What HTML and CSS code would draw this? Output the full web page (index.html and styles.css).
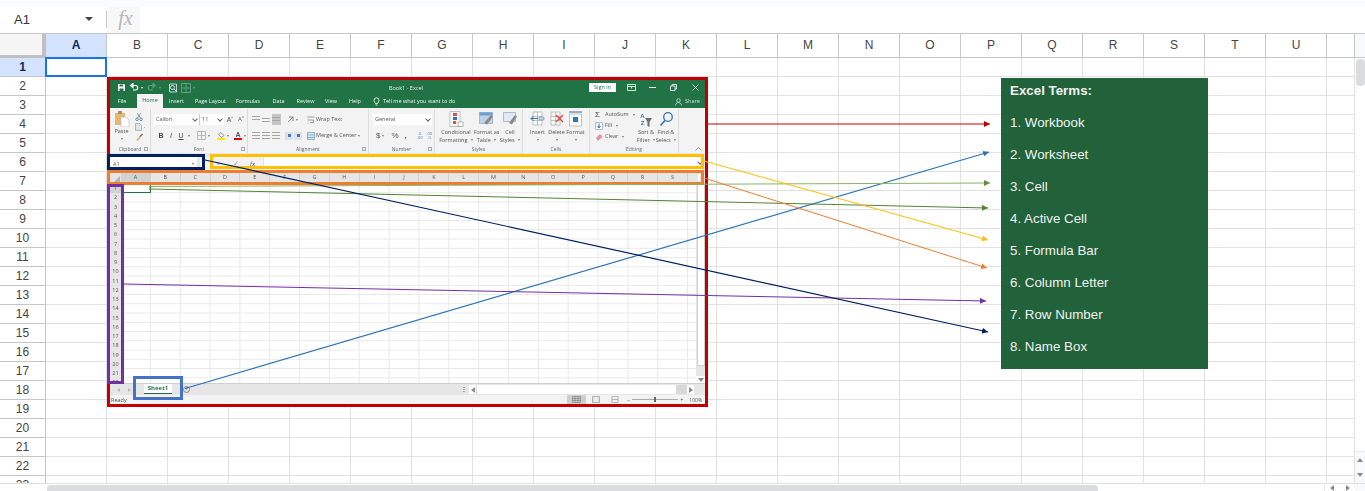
FILE: index.html
```html
<!DOCTYPE html>
<html lang="en">
<head>
    <meta charset="UTF-8">
    <meta name="viewport" content="width=device-width, initial-scale=1.0">
    <title>Excel Terms - Spreadsheet</title>
    <link rel="stylesheet" href="styles.css">
</head>
<body>
    <div class="app">
        <div class="top-strip"></div>

        <!-- Formula bar -->
        <div class="formula-bar">
            <div class="name-box"><span>A1</span><i class="caret"></i></div>
            <div class="fx-box">fx</div>
        </div>

        <!-- Column letters -->
        <div class="col-heads">
            <div class="corner"></div>
            <div class="col-head selected">A</div><div class="col-head">B</div><div class="col-head">C</div><div class="col-head">D</div><div class="col-head">E</div><div class="col-head">F</div><div class="col-head">G</div><div class="col-head">H</div><div class="col-head">I</div><div class="col-head">J</div><div class="col-head">K</div><div class="col-head">L</div><div class="col-head">M</div><div class="col-head">N</div><div class="col-head">O</div><div class="col-head">P</div><div class="col-head">Q</div><div class="col-head">R</div><div class="col-head">S</div><div class="col-head">T</div><div class="col-head">U</div>
            <div class="col-head last"></div>
            <div class="scroll-corner"></div>
        </div>

        <!-- Sheet body -->
        <div class="sheet-body">
            <div class="row-heads">
                <div class="row-head selected">1</div><div class="row-head">2</div><div class="row-head">3</div><div class="row-head">4</div><div class="row-head">5</div><div class="row-head">6</div><div class="row-head">7</div><div class="row-head">8</div><div class="row-head">9</div><div class="row-head">10</div><div class="row-head">11</div><div class="row-head">12</div><div class="row-head">13</div><div class="row-head">14</div><div class="row-head">15</div><div class="row-head">16</div><div class="row-head">17</div><div class="row-head">18</div><div class="row-head">19</div><div class="row-head">20</div><div class="row-head">21</div><div class="row-head">22</div><div class="row-head">23</div>
            </div>
            <div class="cells"><div class="active-cell"></div></div>
            <div class="v-scroll">
                <div class="v-thumb"></div>
                <div class="v-btn"><i class="tri-up"></i></div>
                <div class="v-btn"><i class="tri-down"></i></div>
            </div>
        </div>

        <!-- Bottom scrollbar -->
        <div class="h-scroll">
            <div class="h-thumb"></div>
            <div class="h-btns"><i class="tri-left"></i><i class="tri-right"></i></div>
            <div class="scroll-end"></div>
        </div>

        <!-- Floating Excel screenshot -->
        <div class="excel">
            <div class="xl-title">
                <div class="qat">
                    <svg width="9" height="9" viewBox="0 0 9 9"><path d="M1 1h6l1 1v6H1z" fill="#fff"/><path d="M2.500 1.500h3.500v2h-3.500zM2.500 5.500h4v2.500h-4z" fill="#217346"/></svg>
                    <svg class="qat-undo" width="10" height="9" viewBox="0 0 10 9"><path d="M3 2.500h3.500a2 2 0 0 1 0 4.500H4M1.500 2.500l2.500-2v4z" fill="none" stroke="#fff" stroke-width="1.100"/></svg>
                    <i class="mini-caret white"></i>
                    <svg class="qat-redo" width="10" height="9" viewBox="0 0 10 9"><path d="M7 2.500H3.500a2 2 0 0 0 0 4.500H6M8.500 2.500L6 .5v4z" fill="none" stroke="#5f9c7c" stroke-width="1.100"/></svg>
                    <i class="mini-caret faded"></i>
                    <svg class="qat-preview" width="10" height="10" viewBox="0 0 10 10"><path d="M1.500 1h7v8h-7z" fill="none" stroke="#e4efe9" stroke-width=".8"/><circle cx="4.500" cy="4.500" r="2" fill="none" stroke="#fff" stroke-width=".8"/><path d="M6 6l2.500 2.500" stroke="#fff" stroke-width=".8"/></svg>
                    <svg class="qat-grid" width="10" height="10" viewBox="0 0 10 10"><path d="M.5.5h9v9h-9zM5 .5v9M.5 5h9" fill="none" stroke="#72a78b" stroke-width=".8"/></svg>
                    <i class="mini-caret faded qat-more"></i>
                </div>
                <div class="xl-doc">Book1 - Excel</div>
                <div class="signin">Sign in</div>
                <svg class="win win-ribbon" width="9" height="7" viewBox="0 0 9 7"><path d="M.5.5h8v6h-8zM.5 2.500h8M4.500 2.500v2" fill="none" stroke="#fff" stroke-width=".8"/></svg>
                <div class="win win-min"></div>
                <svg class="win win-restore" width="7" height="7" viewBox="0 0 7 7"><path d="M.5 2h4.500v4.500H.5zM2 2V.5h4.500V5H5" fill="none" stroke="#fff" stroke-width=".8"/></svg>
                <svg class="win win-close" width="7" height="7" viewBox="0 0 7 7"><path d="M.5.5l6 6M6.500.5l-6 6" stroke="#fff" stroke-width=".8"/></svg>
            </div>

            <div class="xl-tabs">
                <div class="xl-tab t-file">File</div>
                <div class="xl-tab t-home">Home</div>
                <div class="xl-tab t-insert">Insert</div>
                <div class="xl-tab t-layout">Page Layout</div>
                <div class="xl-tab t-formulas">Formulas</div>
                <div class="xl-tab t-data">Data</div>
                <div class="xl-tab t-review">Review</div>
                <div class="xl-tab t-view">View</div>
                <div class="xl-tab t-help">Help</div>
                <svg class="bulb" width="7" height="9" viewBox="0 0 7 9"><path d="M2.500 6.500C2 5 1 4.800 1 3.300a2.500 2.500 0 0 1 5 0C6 4.800 5 5 4.500 6.500zM2.500 8h2" fill="none" stroke="#fff" stroke-width=".8"/></svg>
                <div class="tell-me">Tell me what you want to do</div>
                <svg class="person" width="7" height="8" viewBox="0 0 7 8"><circle cx="3.500" cy="2.500" r="1.800" fill="none" stroke="#cfe3d8" stroke-width=".8"/><path d="M.5 7.500c.4-2 1.500-3 3-3s2.600 1 3 3" fill="none" stroke="#cfe3d8" stroke-width=".8"/></svg>
                <div class="share">Share</div>
            </div>

            <div class="ribbon">
                <div class="group g-clip">
                    <div class="group-body">
                        <div class="big paste">
                            <svg width="16" height="17" viewBox="0 0 16 17"><path d="M1 3h10v12H1z" fill="#e3b96f"/><path d="M4 1h4v3H4z" fill="#a98f68"/><path d="M7 7h5l3 3v7H7z" fill="#fff" stroke="#b9b9b9" stroke-width=".6"/></svg>
                            <span>Paste</span>
                            <i class="mini-caret"></i>
                        </div>
                        <div class="clip-tools">
                            <svg width="8" height="8" viewBox="0 0 8 8"><path d="M2 0l3.500 5M6 0L2.500 5" stroke="#6d7c8c" stroke-width=".8"/><circle cx="2" cy="6.300" r="1.300" fill="none" stroke="#4a78b0" stroke-width=".8"/><circle cx="6" cy="6.300" r="1.300" fill="none" stroke="#4a78b0" stroke-width=".8"/></svg>
                            <svg width="11" height="8" viewBox="0 0 11 8"><path d="M.5.5h4l2 2v5h-6z" fill="#dfe6ee" stroke="#8ea6c0" stroke-width=".7"/><path d="M9 4l1 0-1 1z" fill="#666"/></svg>
                            <svg width="8" height="8" viewBox="0 0 8 8"><path d="M4 4l3-3.500 1 1L4.500 5z" fill="#777"/><path d="M1 7l3-3 1.300 1.300L3 8z" fill="#e3b96f"/></svg>
                        </div>
                    </div>
                    <div class="group-label">Clipboard<i class="launcher"></i></div>
                </div>

                <div class="group g-font">
                    <div class="group-body stack">
                        <div class="tool-row">
                            <div class="combo c-font">Calibri<i class="chev"></i></div>
                            <div class="combo c-size">11<i class="chev"></i></div>
                            <span class="grow-a">A<sup>^</sup></span>
                            <span class="grow-a small">A<sup>v</sup></span>
                        </div>
                        <div class="tool-row row-two">
                            <b class="fmt">B</b><em class="fmt">I</em><u class="fmt">U</u><i class="mini-caret"></i>
                            <svg class="border-ic" width="9" height="9" viewBox="0 0 9 9"><path d="M.5.5h8v8h-8zM4.500.5v8M.5 4.500h8" fill="none" stroke="#a9a9a9" stroke-width=".8"/></svg>
                            <i class="mini-caret"></i>
                            <div class="fill-ic"><svg width="8" height="6" viewBox="0 0 8 6"><path d="M4 .5l3 3-2.500 2-3-3z" fill="none" stroke="#777" stroke-width=".8"/></svg><i class="yellow"></i></div>
                            <i class="mini-caret"></i>
                            <div class="color-ic"><span>A</span><i class="red"></i></div>
                            <i class="mini-caret"></i>
                        </div>
                    </div>
                    <div class="group-label">Font<i class="launcher"></i></div>
                </div>

                <div class="group g-align">
                    <div class="group-body">
                        <div class="align-icons">
                            <div class="tool-row">
                                <i class="lines top"></i><i class="lines mid"></i><i class="lines bot on"></i>
                                <svg class="orient" width="7" height="7" viewBox="0 0 7 7"><path d="M1 6l5-5M2 1h4v4" fill="none" stroke="#888"/></svg>
                                <i class="mini-caret"></i>
                            </div>
                            <div class="tool-row row-two">
                                <i class="lines"></i><i class="lines"></i><i class="lines"></i>
                                <i class="indent"></i><i class="indent"></i>
                            </div>
                        </div>
                        <div class="align-text">
                            <div class="tool-row"><svg width="8" height="8" viewBox="0 0 8 8"><path d="M.5 1h7M.5 4h6v2.500H3M.5 7h1" fill="none" stroke="#888" stroke-width=".8"/></svg><span>Wrap Text</span></div>
                            <div class="tool-row row-two"><svg width="8" height="8" viewBox="0 0 8 8"><path d="M.5.5h7v7h-7zM.5 3h7M.5 5.500h7" fill="#dbe8f5" stroke="#6d93bd" stroke-width=".7"/></svg><span>Merge &amp; Center</span><i class="mini-caret"></i></div>
                        </div>
                    </div>
                    <div class="group-label">Alignment<i class="launcher"></i></div>
                </div>

                <div class="group g-number">
                    <div class="group-body stack">
                        <div class="tool-row"><div class="combo c-general">General<i class="chev"></i></div></div>
                        <div class="tool-row row-two num-row">
                            <span class="sym">$</span><i class="mini-caret"></i><span class="sym pct">%</span><span class="sym comma">,</span>
                            <span class="dec">.0<br>.00</span><span class="dec">.00<br>.0</span>
                        </div>
                    </div>
                    <div class="group-label">Number<i class="launcher"></i></div>
                </div>

                <div class="group g-styles">
                    <div class="group-body">
                        <div class="big w36">
                            <svg width="15" height="16" viewBox="0 0 15 16"><path d="M1 .5h10v15H1z" fill="#fff" stroke="#a8a8a8" stroke-width=".7"/><path d="M4 2h4v3H4z" fill="#d9534f"/><path d="M4 6h4v3H4z" fill="#2f75b5"/><path d="M4 10h3v3H4z" fill="#d9534f"/><path d="M9 11h5v4.500H9z" fill="#fff" stroke="#888" stroke-width=".6"/></svg>
                            <span>Conditional<br>Formatting <i class="mini-caret"></i></span>
                        </div>
                        <div class="big w25">
                            <svg width="15" height="16" viewBox="0 0 15 16"><path d="M.5 1.500h13v11H.5z" fill="#bcd3ea" stroke="#8ea6c0" stroke-width=".7"/><path d="M.5 1.500h13v3H.5z" fill="#6f9fcf"/><path d="M5 12l7-8 2 1.500-6 8z" fill="#8a8a8a"/></svg>
                            <span>Format as<br>Table <i class="mini-caret"></i></span>
                        </div>
                        <div class="big w22">
                            <svg width="15" height="16" viewBox="0 0 15 16"><path d="M.5 1.500h12v9H.5z" fill="#dfeaf5" stroke="#8ea6c0" stroke-width=".7"/><path d="M6 12l6-8 2 1.500-5 8z" fill="#8a8a8a"/></svg>
                            <span>Cell<br>Styles <i class="mini-caret"></i></span>
                        </div>
                    </div>
                    <div class="group-label">Styles</div>
                </div>

                <div class="group g-cells">
                    <div class="group-body">
                        <div class="big w19">
                            <svg width="15" height="16" viewBox="0 0 15 16"><path d="M3 1h9v13H3zM3 5.500h9M3 9.500h9M7.500 1v13" fill="#fff" stroke="#a8a8a8" stroke-width=".7"/><path d="M1 7.500h7M3.500 5l-2.500 2.500 2.500 2.500" fill="none" stroke="#2f75b5"/><path d="M9 6h5v3H9z" fill="#bcd3ea" stroke="#6d93bd" stroke-width=".6"/></svg>
                            <span>Insert</span><i class="mini-caret"></i>
                        </div>
                        <div class="big w19">
                            <svg width="15" height="16" viewBox="0 0 15 16"><path d="M2 1h9v13H2zM2 5.500h9M2 9.500h9M6.500 1v13" fill="#fff" stroke="#a8a8a8" stroke-width=".7"/><path d="M7 4l7 7M14 4l-7 7" stroke="#d9432f" stroke-width="1.200"/></svg>
                            <span>Delete</span><i class="mini-caret"></i>
                        </div>
                        <div class="big w19">
                            <svg width="15" height="16" viewBox="0 0 15 16"><path d="M1.500 3h12v12h-12z" fill="#fff" stroke="#a8a8a8" stroke-width=".7"/><path d="M5 6h5v5H5z" fill="#2f75b5"/><path d="M1 1h13" stroke="#2f75b5"/></svg>
                            <span>Format</span><i class="mini-caret"></i>
                        </div>
                    </div>
                    <div class="group-label">Cells</div>
                </div>

                <div class="group g-edit">
                    <div class="group-body">
                        <div class="edit-list">
                            <div class="edit-row"><span class="sigma">&Sigma;</span><span>AutoSum</span><i class="mini-caret"></i></div>
                            <div class="edit-row"><svg width="8" height="8" viewBox="0 0 8 8"><path d="M.5.5h7v7h-7z" fill="#fff" stroke="#8ea6c0" stroke-width=".7"/><path d="M4 1.500v4M2.500 4L4 6l1.500-2" fill="none" stroke="#2f75b5"/></svg><span>Fill</span><i class="mini-caret"></i></div>
                            <div class="edit-row"><svg width="8" height="8" viewBox="0 0 8 8"><path d="M1 5l4-4 2.500 2.500-4 4H2.500z" fill="#e88da2"/></svg><span>Clear</span><i class="mini-caret"></i></div>
                        </div>
                        <div class="big w20">
                            <div class="sort-ic"><span class="az">A<br>Z</span><svg width="7" height="9" viewBox="0 0 7 9"><path d="M0 0h7L4.500 4v5l-2-1V4z" fill="#6d6d6d"/></svg></div>
                            <span>Sort &amp;<br>Filter <i class="mini-caret"></i></span>
                        </div>
                        <div class="big w20">
                            <svg width="15" height="16" viewBox="0 0 15 16"><circle cx="9" cy="6" r="4.300" fill="none" stroke="#2f75b5" stroke-width="1.300"/><path d="M6 9.500L1.500 14.500" stroke="#2f75b5" stroke-width="1.600"/></svg>
                            <span>Find &amp;<br>Select <i class="mini-caret"></i></span>
                        </div>
                    </div>
                    <div class="group-label">Editing</div>
                </div>

                <div class="ribbon-end"><svg width="7" height="4" viewBox="0 0 7 4"><path d="M.5 3.500L3.500.5l3 3" fill="none" stroke="#777" stroke-width=".8"/></svg></div>
            </div>

            <div class="xl-formula">
                <div class="xl-name"><span>A1</span><i class="mini-caret"></i></div>
                <div class="xl-fx"><span class="fx-x">&times;</span><span class="fx-x">&#10003;</span><span class="fx-f">fx</span></div>
                <div class="xl-input"><i class="chev"></i></div>
            </div>

            <div class="xl-cols">
                <div class="xl-corner"><i></i></div>
                <div class="xl-col on">A</div><div class="xl-col">B</div><div class="xl-col">C</div><div class="xl-col">D</div><div class="xl-col">E</div><div class="xl-col">F</div><div class="xl-col">G</div><div class="xl-col">H</div><div class="xl-col">I</div><div class="xl-col">J</div><div class="xl-col">K</div><div class="xl-col">L</div><div class="xl-col">M</div><div class="xl-col">N</div><div class="xl-col">O</div><div class="xl-col">P</div><div class="xl-col">Q</div><div class="xl-col">R</div><div class="xl-col">S</div>
                <div class="xl-cols-end"><span class="xl-up"><i class="tri-up"></i></span></div>
            </div>

            <div class="xl-grid">
                <div class="xl-rows">
                    <div class="xl-row on">1</div><div class="xl-row">2</div><div class="xl-row">3</div><div class="xl-row">4</div><div class="xl-row">5</div><div class="xl-row">6</div><div class="xl-row">7</div><div class="xl-row">8</div><div class="xl-row">9</div><div class="xl-row">10</div><div class="xl-row">11</div><div class="xl-row">12</div><div class="xl-row">13</div><div class="xl-row">14</div><div class="xl-row">15</div><div class="xl-row">16</div><div class="xl-row">17</div><div class="xl-row">18</div><div class="xl-row">19</div><div class="xl-row">20</div><div class="xl-row">21</div><div class="xl-row">22</div>
                </div>
                <div class="xl-cells"><div class="xl-active"></div></div>
                <div class="xl-vscroll">
                    <div class="xl-vthumb"></div>
                    <div class="xl-vbtn"><i class="tri-down"></i></div>
                </div>
            </div>

            <div class="xl-sheets">
                <i class="tri-left"></i><i class="tri-right"></i>
                <div class="xl-sheet">Sheet1</div>
                <div class="xl-add">+</div>
                <div class="xl-dots"></div>
                <div class="xl-hscroll">
                    <div class="xl-hbtn"><i class="tri-left"></i></div>
                    <div class="xl-hthumb"></div>
                    <div class="xl-hbtn"><i class="tri-right"></i></div>
                </div>
            </div>

            <div class="xl-status">
                <span class="ready">Ready</span>
                <div class="view-btn on"><svg width="9" height="7" viewBox="0 0 9 7"><path d="M.5.5h8v6h-8zM3 .5v6M6 .5v6M.5 2.500h8M.5 4.500h8" fill="none" stroke="#777" stroke-width=".6"/></svg></div>
                <div class="view-btn"><svg width="8" height="7" viewBox="0 0 8 7"><path d="M.5.5h7v6h-7z" fill="#ddd" stroke="#999" stroke-width=".7"/><path d="M2.500 1h3v5h-3z" fill="#f3f3f3"/></svg></div>
                <div class="view-btn"><svg width="8" height="7" viewBox="0 0 8 7"><path d="M1 .5h6v6H1zM1 3.500h6" fill="none" stroke="#999" stroke-width=".7"/></svg></div>
                <div class="zoom-bar"><span>&minus;</span><div class="zoom-track"><i></i></div><span>+</span></div>
                <span class="zoom-pct">100%</span>
            </div>
        </div>

        <!-- Coloured marks drawn over the screenshot -->
        <div class="mark mark-red"></div>
        <div class="mark mark-yellow"></div>
        <div class="mark mark-orange"></div>
        <div class="mark mark-navy"></div>
        <div class="mark mark-purple"></div>
        <div class="mark mark-blue"></div>

        <svg class="arrows" width="1365" height="491" viewBox="0 0 1365 491">
            <defs>
                <marker id="h-red" markerUnits="userSpaceOnUse" markerWidth="7" markerHeight="6" refX="6" refY="3" orient="auto"><path d="M0 0l6 3-6 3z" fill="#c00000"/></marker>
                <marker id="h-blue" markerUnits="userSpaceOnUse" markerWidth="7" markerHeight="6" refX="6" refY="3" orient="auto"><path d="M0 0l6 3-6 3z" fill="#2e75b6"/></marker>
                <marker id="h-green" markerUnits="userSpaceOnUse" markerWidth="7" markerHeight="6" refX="6" refY="3" orient="auto"><path d="M0 0l6 3-6 3z" fill="#5f8f3e"/></marker>
                <marker id="h-dark" markerUnits="userSpaceOnUse" markerWidth="7" markerHeight="6" refX="6" refY="3" orient="auto"><path d="M0 0l6 3-6 3z" fill="#548235"/></marker>
                <marker id="h-yellow" markerUnits="userSpaceOnUse" markerWidth="7" markerHeight="6" refX="6" refY="3" orient="auto"><path d="M0 0l6 3-6 3z" fill="#ffc000"/></marker>
                <marker id="h-orange" markerUnits="userSpaceOnUse" markerWidth="7" markerHeight="6" refX="6" refY="3" orient="auto"><path d="M0 0l6 3-6 3z" fill="#ed7d31"/></marker>
                <marker id="h-purple" markerUnits="userSpaceOnUse" markerWidth="7" markerHeight="6" refX="6" refY="3" orient="auto"><path d="M0 0l6 3-6 3z" fill="#7030a0"/></marker>
                <marker id="h-navy" markerUnits="userSpaceOnUse" markerWidth="7" markerHeight="6" refX="6" refY="3" orient="auto"><path d="M0 0l6 3-6 3z" fill="#002060"/></marker>
            </defs>
            <line x1="708" y1="124" x2="990" y2="124" stroke="#c00000" marker-end="url(#h-red)"/>
            <line x1="185" y1="388.500" x2="989" y2="152" stroke="#2e75b6" stroke-width="1.200" marker-end="url(#h-blue)"/>
            <line x1="150" y1="186.500" x2="990" y2="183" stroke="#86b566" marker-end="url(#h-green)"/>
            <path d="M150 186v4" stroke="#548235" fill="none"/>
            <line x1="150" y1="189" x2="988" y2="208" stroke="#548235" marker-end="url(#h-dark)"/>
            <line x1="704" y1="161" x2="988" y2="240" stroke="#ffc000" marker-end="url(#h-yellow)"/>
            <line x1="704" y1="178" x2="987" y2="268" stroke="#ed7d31" marker-end="url(#h-orange)"/>
            <line x1="124" y1="284" x2="986" y2="301" stroke="#7030a0" marker-end="url(#h-purple)"/>
            <line x1="205" y1="160" x2="988" y2="332" stroke="#002060" stroke-width="1.200" marker-end="url(#h-navy)"/>
        </svg>

        <!-- Terms panel -->
        <div class="terms">
            <h2>Excel Terms:</h2>
            <p>1. Workbook</p>
            <p>2. Worksheet</p>
            <p>3. Cell</p>
            <p>4. Active Cell</p>
            <p>5. Formula Bar</p>
            <p>6. Column Letter</p>
            <p>7. Row Number</p>
            <p>8. Name Box</p>
        </div>
    </div>
</body>
</html>
```

FILE: styles.css
```css
* {
    margin: 0;
    padding: 0;
    box-sizing: border-box;
}

body {
    background: #fff;
    font-family: "Liberation Sans", Arial, sans-serif;
    overflow: hidden;
}

i {
    display: block;
    font-style: normal;
}

.app {
    position: relative;
    display: flex;
    flex-direction: column;
    width: 1365px;
    height: 491px;
    overflow: hidden;
}

.top-strip {
    height: 7px;
    background: #f9fbfd;
}

/* Formula bar */
.formula-bar {
    display: flex;
    align-items: center;
    height: 27px;
    border-bottom: 1px solid #c4c7c5;
}

.name-box {
    display: flex;
    align-items: center;
    justify-content: space-between;
    width: 107px;
    height: 17px;
    margin-bottom: 2px;
    padding: 0 13px 0 14px;
    border-right: 1px solid #c7c7c7;
    font-size: 13px;
    color: #333;
}

.caret {
    border-left: 4px solid transparent;
    border-right: 4px solid transparent;
    border-top: 4px solid #444;
}

.fx-box {
    width: 33px;
    height: 26px;
    padding-left: 4px;
    background: #f8f8f8;
    color: #b5b5b5;
    font-family: "Liberation Serif", serif;
    font-style: italic;
    font-size: 20px;
    line-height: 22px;
    text-align: center;
}

/* Column letters */
.col-heads {
    display: flex;
    height: 24px;
    flex-shrink: 0;
    border-bottom: 1px solid #c4c7c5;
}

.corner {
    width: 46px;
    background: #f5f5f5;
    border-right: 4px solid #c0c0c0;
    border-bottom: 3px solid #c0c0c0;
    margin-bottom: -1px;
}

.col-head {
    width: 61px;
    border-right: 1px solid #c4c7c5;
    font-size: 12px;
    line-height: 23px;
    text-align: center;
    color: #444;
}

.col-head.selected {
    background: #d3e3fd;
    color: #0b2a55;
    font-weight: bold;
}

.col-head.last {
    width: 28px;
}

.scroll-corner {
    flex: 1;
    background: #f8f9fa;
}

/* Sheet body */
.sheet-body {
    display: flex;
    flex: 1;
    min-height: 0;
}

.row-heads {
    width: 46px;
    border-right: 1px solid #c4c7c5;
    overflow: hidden;
}

.row-head {
    height: 19px;
    border-bottom: 1px solid #c4c7c5;
    font-size: 12px;
    line-height: 18px;
    text-align: center;
    color: #444;
}

.row-head.selected {
    background: #d3e3fd;
    color: #0b2a55;
    font-weight: bold;
}

.cells {
    position: relative;
    width: 1309px;
    background-image:
        linear-gradient(to right, transparent 60px, #e1e1e1 60px),
        linear-gradient(to bottom, transparent 18px, #e1e1e1 18px);
    background-size: 61px 19px;
}

.active-cell {
    position: absolute;
    left: -1px;
    top: -1px;
    width: 62px;
    height: 20px;
    border: 2px solid #1a73e8;
}

.v-scroll {
    display: flex;
    flex-direction: column;
    flex: 1;
    border-left: 1px solid #e1e1e1;
    position: relative;
}

.v-thumb {
    width: 9px;
    height: 27px;
    margin: 1px 0 0 1px;
    border-radius: 4px;
    background: #dadce0;
}

.v-btn {
    display: flex;
    align-items: center;
    justify-content: center;
    height: 16px;
    background: #f8f9fa;
}

.v-thumb + .v-btn {
    margin-top: auto;
    border-top: 1px solid #e8e8e8;
}

.tri-up, .tri-down {
    border-left: 3px solid transparent;
    border-right: 3px solid transparent;
}

.tri-up {
    border-bottom: 4px solid #8a8a8a;
}

.tri-down {
    border-top: 4px solid #8a8a8a;
}

.tri-left, .tri-right {
    border-top: 3px solid transparent;
    border-bottom: 3px solid transparent;
}

.tri-left {
    border-right: 4px solid #8a8a8a;
}

.tri-right {
    border-left: 4px solid #8a8a8a;
}

/* Bottom scrollbar */
.h-scroll {
    display: flex;
    height: 8px;
    flex-shrink: 0;
    border-top: 1px solid #e1e1e1;
    padding-left: 47px;
}

.h-thumb {
    width: 1051px;
    height: 7px;
    margin-top: 1px;
    border-radius: 4px 4px 0 0;
    background: #dadce0;
}

.h-btns {
    display: flex;
    align-items: center;
    justify-content: space-between;
    width: 31px;
    margin-left: 226px;
    padding: 0 5px;
    border-left: 1px solid #e8e8e8;
}

.scroll-end {
    flex: 1;
    background: #f8f9fa;
}

/* Floating Excel screenshot */
.excel {
    position: absolute;
    left: 107px;
    top: 77px;
    display: flex;
    flex-direction: column;
    width: 601px;
    height: 330px;
    padding: 3px;
    background: #fff;
    font-family: "Open Sans", sans-serif;
    font-size: 5.500px;
    color: #555;
    filter: blur(.3px);
}

.xl-title {
    display: flex;
    align-items: center;
    height: 15px;
    background: #217346;
    color: #fff;
}

.qat {
    display: flex;
    align-items: center;
    width: 279px;
    padding-left: 7px;
}

.qat-undo {
    margin-left: 3px;
}

.qat-redo {
    margin-left: 4px;
}

.qat-preview {
    margin-left: 7px;
}

.qat-grid {
    margin-left: 3px;
}

.qat-more {
    margin-left: 8px;
}

.mini-caret {
    display: inline-block;
    margin-left: 2px;
    vertical-align: middle;
    border-left: 1.500px solid transparent;
    border-right: 1.500px solid transparent;
    border-top: 2px solid #777;
}

.mini-caret.white {
    border-top-color: #fff;
}

.mini-caret.faded {
    border-top-color: #6fa88a;
}

.xl-doc {
    width: 200px;
    text-align: left;
    font-size: 5.500px;
    color: #e6f0ea;
}

.signin {
    width: 27px;
    height: 9px;
    background: #fff;
    color: #217346;
    text-align: center;
    line-height: 9px;
}

.win {
    margin-left: 11px;
}

.win-min {
    width: 7px;
    height: 1px;
    margin-left: 13px;
    background: #fff;
}

.win-restore {
    margin-left: 14px;
}

.win-close {
    margin-left: 15px;
}

.xl-tabs {
    display: flex;
    align-items: stretch;
    height: 13px;
    background: #217346;
    color: #f0f6f2;
    line-height: 13px;
}

.xl-tab {
    text-align: center;
}

.t-file {
    width: 27px;
    padding-right: 3px;
}
.t-home {
    width: 26px;
    margin-top: -1px;
    background: #f3f3f3;
    color: #217346;
}
.t-insert { width: 27px; }
.t-layout { width: 41px; }
.t-formulas { width: 34px; }
.t-data { width: 27px; }
.t-review { width: 27px; }
.t-view { width: 24px; }
.t-help {
    width: 26px;
    padding-right: 2px;
}

.bulb {
    margin: 2px 0 0 4px;
}

.tell-me {
    width: 292px;
    margin-left: 3px;
}

.person {
    margin-top: 3px;
}

.share {
    margin-left: 3px;
    color: #cfe3d8;
}

/* Ribbon */
.ribbon {
    display: flex;
    height: 45px;
    background: #f3f3f3;
    line-height: 7.500px;
}

.group {
    display: flex;
    flex-direction: column;
    height: 44px;
    margin-top: 1px;
    border-right: 1px solid #dcdcdc;
    flex-shrink: 0;
}

.group-body {
    display: flex;
    flex: 1;
    min-height: 0;
}

.group-body.stack {
    flex-direction: column;
}

.group-label {
    position: relative;
    height: 8px;
    text-align: center;
    font-size: 5px;
    line-height: 8px;
    color: #666;
}

.launcher {
    position: absolute;
    right: 2px;
    top: 2px;
    width: 4px;
    height: 4px;
    border: 1px solid #aaa;
}

.g-clip { width: 41px; }
.g-font { width: 97px; }
.g-align { width: 121px; }
.g-number { width: 66px; }
.g-styles { width: 88px; }
.g-cells { width: 67px; }
.g-edit { width: 89px; }

.big {
    display: flex;
    flex-direction: column;
    align-items: center;
    padding-top: 2px;
    text-align: center;
    white-space: nowrap;
    flex-shrink: 0;
}

.big > svg, .big .sort-ic {
    margin-bottom: 2px;
    flex-shrink: 0;
}

.paste {
    width: 23px;
    padding-top: 1px;
}

.paste svg {
    margin-bottom: 1px;
}

.paste .mini-caret, .w19 .mini-caret {
    margin: 2px 0 0;
}

.clip-tools {
    display: flex;
    flex-direction: column;
    gap: 2px;
    padding: 4px 0 0 2px;
}

.tool-row {
    display: flex;
    align-items: center;
    height: 11px;
    margin-top: 5px;
}

.row-two {
    margin-top: 5px;
}

.combo {
    position: relative;
    height: 11px;
    padding-left: 2px;
    background: #fff;
    line-height: 11px;
    font-size: 5.500px;
}

.chev {
    position: absolute;
    right: 2px;
    top: 3px;
    width: 4px;
    height: 4px;
    border-right: 1px solid #666;
    border-bottom: 1px solid #666;
    transform: rotate(45deg);
}

.c-font {
    width: 46px;
    margin-left: 3px;
    border-right: 1px solid #ccc;
}

.c-size {
    width: 24px;
}

.grow-a {
    width: 10px;
    margin-left: 1px;
    font-size: 7px;
    text-align: center;
}

.grow-a.small {
    font-size: 6px;
}

.grow-a sup {
    font-size: 4px;
    line-height: 0;
}

.fmt {
    width: 10px;
    font-family: "Liberation Sans", sans-serif;
    font-size: 7px;
    text-align: center;
    color: #444;
}

b.fmt {
    margin-left: 5px;
}

.border-ic {
    margin-left: 7px;
}

.fill-ic {
    width: 8px;
    margin-left: 7px;
}

.fill-ic svg {
    display: block;
}

.yellow {
    height: 2px;
    background: #ffeb00;
}

.red {
    height: 2px;
    background: #e00000;
}

.color-ic {
    width: 8px;
    margin-left: 5px;
    font-family: "Liberation Sans", sans-serif;
    font-size: 7px;
    font-weight: bold;
    line-height: 6px;
    text-align: center;
    color: #555;
}

.align-icons {
    width: 58px;
    padding-left: 4px;
}

.lines {
    width: 8px;
    height: 8px;
    margin-right: 2px;
    background: repeating-linear-gradient(to bottom, #a5a5a5 0 1px, transparent 1px 3px);
}

.lines.top, .lines.mid, .lines.bot {
    background-size: 8px 5px;
    background-repeat: no-repeat;
}

.lines.mid {
    background-position: 0 2px;
}

.lines.bot {
    background-color: #c6c6c6;
    background-position: 0 3px;
    width: 9px;
    height: 11px;
    margin-right: 5px;
}

.orient {
    margin-left: 1px;
}

.indent {
    width: 8px;
    height: 8px;
    margin-left: 1px;
    background: linear-gradient(#3f7cc0, #3f7cc0) center / 3px 3px no-repeat, #dde3ea;
}

.lines + .indent {
    margin-left: 3px;
}

.align-text {
    color: #555;
    padding-left: 1px;
}

.align-text svg {
    margin-right: 1px;
    flex-shrink: 0;
}

.align-text span {
    white-space: nowrap;
}

.c-general {
    width: 59px;
    margin-left: 4px;
}

.num-row {
    padding-left: 7px;
    color: #555;
}

.sym {
    font-family: "Liberation Sans", sans-serif;
    font-size: 8px;
}

.pct {
    margin-left: 7px;
}

.comma {
    margin-left: 6px;
    font-weight: bold;
}

.dec {
    width: 10px;
    font-size: 4px;
    line-height: 4px;
    color: #3f7cc0;
    text-align: center;
}

.comma + .dec {
    margin-left: 8px;
}

.g-styles .group-body {
    padding-left: 3px;
}

.w36 { width: 36px; }
.w25 { width: 25px; }
.w22 { width: 22px; }
.w19 { width: 19px; }
.w20 { width: 20px; }

.g-cells .group-body {
    padding-left: 5px;
}

.edit-list {
    display: flex;
    flex-direction: column;
    gap: 3px;
    width: 46px;
    padding: 2px 0 0 5px;
}

.edit-row {
    display: flex;
    align-items: center;
    gap: 2px;
    height: 8px;
    white-space: nowrap;
}

.sigma {
    width: 8px;
    font-family: "Liberation Sans", sans-serif;
    font-size: 8px;
    color: #444;
}

.sort-ic {
    display: flex;
    align-items: flex-end;
    height: 16px;
}

.az {
    font-family: "Liberation Sans", sans-serif;
    font-size: 6px;
    line-height: 7px;
    font-weight: bold;
    color: #2f75b5;
}

.ribbon-end {
    display: flex;
    flex: 1;
    align-items: flex-end;
    justify-content: flex-end;
    padding: 0 3px 2px 0;
}

/* Excel formula row */
.xl-formula {
    display: flex;
    height: 18px;
    padding: 4px 1px 1px 0;
    background: #e6e6e6;
}

.xl-name {
    display: flex;
    align-items: center;
    justify-content: space-between;
    width: 87px;
    padding: 0 3px;
    background: #fff;
    line-height: 12px;
}

.xl-fx {
    display: flex;
    align-items: center;
    width: 63px;
    margin-left: 3px;
    padding-left: 16px;
    background: #f3f3f3;
    color: #999;
    font-size: 7px;
}

.fx-x {
    width: 17px;
}

.fx-f {
    font-family: "Liberation Serif", serif;
    font-style: italic;
    color: #555;
}

.xl-input {
    position: relative;
    flex: 1;
    margin-left: 1px;
    background: #fff;
}

/* Excel column letters */
.xl-cols {
    display: flex;
    height: 13px;
    background: #e6e6e6;
    line-height: 13px;
    color: #555;
}

.xl-corner {
    position: relative;
    width: 11px;
}

.xl-corner i {
    position: absolute;
    right: 1px;
    bottom: 1px;
    border-left: 7px solid transparent;
    border-bottom: 7px solid #b5b5b5;
}

.xl-col {
    width: 29.850px;
    border-right: 1px solid #d0d0d0;
    text-align: center;
}

.xl-col.on {
    background: #d2d2d2;
    color: #217346;
}

.xl-cols-end {
    display: flex;
    flex: 1;
    align-items: center;
    justify-content: flex-end;
}

.xl-up {
    display: flex;
    align-items: center;
    justify-content: center;
    width: 7px;
    height: 7px;
    background: #fff;
}

.xl-up .tri-up {
    border-left-width: 2px;
    border-right-width: 2px;
    border-bottom-width: 2px;
    border-bottom-color: #666;
}

/* Excel grid */
.xl-grid {
    display: flex;
    height: 199px;
    overflow: hidden;
}

.xl-rows {
    width: 11px;
    flex-shrink: 0;
    background: #e6e6e6;
}

.xl-row {
    height: 9.260px;
    line-height: 9.260px;
    text-align: center;
    color: #555;
}

.xl-row.on {
    background: #d2d2d2;
    color: #217346;
}

.xl-cells {
    position: relative;
    width: 575px;
    background-image:
        linear-gradient(to right, transparent 28.850px, #e8e8e8 28.850px),
        linear-gradient(to bottom, transparent 8.260px, #e8e8e8 8.260px);
    background-size: 29.850px 9.260px;
}

.xl-active {
    position: absolute;
    left: 0;
    top: 0;
    width: 30px;
    height: 9px;
    border: 1px solid #217346;
}

.xl-vscroll {
    display: flex;
    flex-direction: column;
    flex: 1;
    background: #e6e6e6;
}

.xl-vthumb {
    height: 182px;
    margin: 0 0 0 1px;
    background: #fff;
    border: 1px solid #d0d0d0;
}

.xl-vbtn {
    display: flex;
    align-items: center;
    justify-content: center;
    height: 7px;
    margin-top: auto;
    background: #fff;
}

/* Sheet tabs */
.xl-sheets {
    display: flex;
    align-items: center;
    height: 12px;
    padding-left: 7px;
    background: #e6e6e6;
    border-top: 1px solid #cfcfcf;
}

.xl-sheets > .tri-left {
    border-top-width: 2px;
    border-bottom-width: 2px;
    border-right-width: 3px;
    border-right-color: #bdbdbd;
    margin-right: 8px;
}

.xl-sheets > .tri-right {
    border-top-width: 2px;
    border-bottom-width: 2px;
    border-left-width: 3px;
    border-left-color: #bdbdbd;
}

.xl-sheet {
    width: 28px;
    height: 10px;
    margin: -2px 0 0 13px;
    background: #fff;
    border-bottom: 1px solid #217346;
    font-size: 6px;
    font-weight: bold;
    line-height: 9px;
    text-align: center;
    color: #217346;
}

.xl-add {
    width: 7px;
    height: 7px;
    margin-left: 11px;
    border: 1px solid #888;
    border-radius: 50%;
    font-size: 5px;
    line-height: 5px;
    text-align: center;
}

.xl-dots {
    width: 2px;
    height: 6px;
    margin-left: 273px;
    background: repeating-linear-gradient(to bottom, #aaa 0 1px, transparent 1px 2px);
}

.xl-hscroll {
    display: flex;
    width: 225px;
    height: 9px;
    margin-left: 4px;
    background: #d8d8d8;
}

.xl-hbtn {
    display: flex;
    align-items: center;
    justify-content: center;
    width: 7px;
    background: #fff;
}

.xl-hthumb {
    width: 199px;
    margin-left: 1px;
    background: #fff;
    margin-right: 11px;
}

/* Status bar */
.xl-status {
    display: flex;
    align-items: center;
    flex: 1;
    padding-left: 1px;
    background: #f3f3f3;
}

.ready {
    width: 456px;
}

.view-btn {
    display: flex;
    align-items: center;
    justify-content: center;
    width: 19px;
    height: 9px;
}

.view-btn.on {
    background: #cfcfcf;
}

.zoom-bar {
    display: flex;
    align-items: center;
    gap: 2px;
    margin-left: 3px;
}

.zoom-track {
    position: relative;
    width: 46px;
    height: 1px;
    background: #aaa;
}

.zoom-track i {
    position: absolute;
    left: 22px;
    top: -2px;
    width: 2px;
    height: 5px;
    background: #666;
}

.zoom-pct {
    margin-left: 6px;
    font-size: 5px;
}

/* Coloured marks */
.mark {
    position: absolute;
    border: 3px solid;
}

.mark-red {
    left: 107px;
    top: 77px;
    width: 601px;
    height: 330px;
    border-color: #c00000;
}

.mark-yellow {
    left: 210px;
    top: 154px;
    width: 494px;
    height: 15px;
    border-color: #ffc000;
}

.mark-orange {
    left: 107px;
    top: 170px;
    width: 597px;
    height: 15px;
    border-color: #ed7d31;
}

.mark-navy {
    left: 107px;
    top: 154px;
    width: 98px;
    height: 16px;
    border-color: #002060;
}

.mark-purple {
    left: 107px;
    top: 184px;
    width: 17px;
    height: 200px;
    border-color: #7030a0;
}

.mark-blue {
    left: 133px;
    top: 376px;
    width: 50px;
    height: 24px;
    border-color: #4472c4;
}

.arrows {
    position: absolute;
    left: 0;
    top: 0;
    pointer-events: none;
}

/* Terms panel */
.terms {
    position: absolute;
    left: 1001px;
    top: 78px;
    width: 207px;
    height: 291px;
    padding: 1px 0 0 9px;
    background: #21623a;
    color: #f1f1f1;
    font-size: 13.330px;
}

.terms h2 {
    margin-bottom: 4px;
    font-size: 13.330px;
    line-height: 24px;
}

.terms p {
    line-height: 32px;
}
```
